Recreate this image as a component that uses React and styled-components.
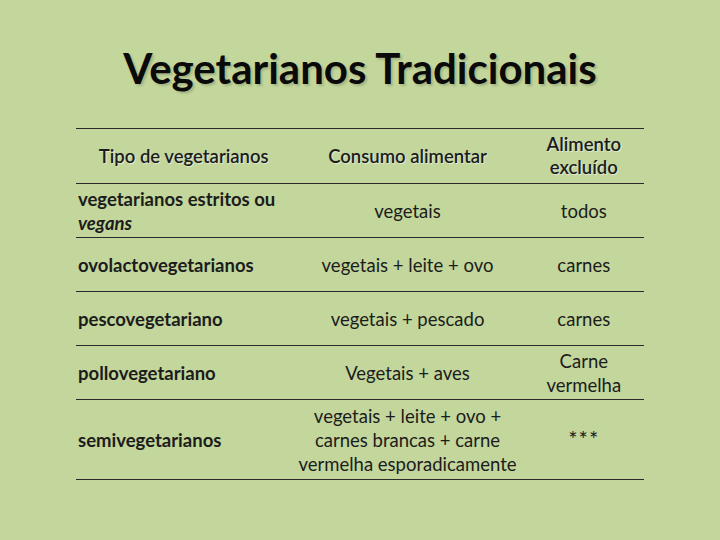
import React from "react";
import styled, { createGlobalStyle } from "styled-components";

const rows = [
  { tipo: "vegetarianos estritos ou", tipoExtra: "vegans", consumo: ["vegetais"], excluido: ["todos"] },
  { tipo: "ovolactovegetarianos", consumo: ["vegetais + leite + ovo"], excluido: ["carnes"] },
  { tipo: "pescovegetariano", consumo: ["vegetais + pescado"], excluido: ["carnes"] },
  { tipo: "pollovegetariano", consumo: ["Vegetais + aves"], excluido: ["Carne", "vermelha"] },
  {
    tipo: "semivegetarianos",
    consumo: ["vegetais + leite + ovo +", "carnes brancas + carne", "vermelha esporadicamente"],
    excluido: ["***"],
    tall: true,
  },
];

const GlobalStyle = createGlobalStyle`
  html, body {
    margin: 0;
    padding: 0;
    background: #c3d69b;
  }
  body {
    font-family: Lato, "Open Sans", sans-serif;
    color: #1c1c1c;
  }
`;

const Slide = styled.div`
  width: 720px;
  height: 540px;
  box-sizing: border-box;
  padding: 38px 76px 0 76px;
  background: #c3d69b;
`;

const Title = styled.h1`
  margin: 0 0 29px 0;
  text-align: center;
  font-size: 42px;
  font-weight: 700;
  color: #0a0a0a;
  height: 61px;
  line-height: 61px;
  text-shadow: 2px 2px 2px rgba(110, 120, 90, 0.35);
`;

const Table = styled.table`
  width: 568px;
  border-collapse: collapse;
  border-top: 1.5px solid #2a2a2a;
`;

const HeadCell = styled.th`
  height: 54px;
  padding: 0 2px;
  font-size: 18.5px;
  font-weight: 600;
  line-height: 23px;
  text-align: center;
  vertical-align: middle;
  width: ${(p) => p.$w}px;
  border-bottom: 1.5px solid #2a2a2a;
  text-shadow: 1px 1px 1px rgba(255, 255, 255, 0.55);
`;

const Cell = styled.td`
  height: ${(p) => (p.$tall ? 79 : 53)}px;
  padding: 0 2px;
  font-size: 18.5px;
  line-height: 24px;
  font-weight: ${(p) => (p.$bold ? 700 : 400)};
  text-align: ${(p) => (p.$left ? "left" : "center")};
  vertical-align: middle;
  border-bottom: 1.5px solid #2a2a2a;
`;

const Line = styled.div`
  white-space: nowrap;
`;

const Stars = styled.span`
  font-size: 22px;
  letter-spacing: 1px;
`;

export default function App() {
  return (
    <Slide>
      <GlobalStyle />
      <Title>Vegetarianos Tradicionais</Title>
      <Table>
        <thead>
          <tr>
            <HeadCell $w={214}>Tipo de vegetarianos</HeadCell>
            <HeadCell $w={230}>Consumo alimentar</HeadCell>
            <HeadCell $w={124}>
              <Line>Alimento</Line>
              <Line>excluído</Line>
            </HeadCell>
          </tr>
        </thead>
        <tbody>
          {rows.map((r) => (
            <tr key={r.tipo}>
              <Cell $bold $left $tall={r.tall}>
                <Line>{r.tipo}</Line>
                {r.tipoExtra && (
                  <Line>
                    <i>{r.tipoExtra}</i>
                  </Line>
                )}
              </Cell>
              <Cell $tall={r.tall}>
                {r.consumo.map((c) => (
                  <Line key={c}>{c}</Line>
                ))}
              </Cell>
              <Cell $tall={r.tall}>
                {r.excluido.map((c) => (
                  <Line key={c}>{c === "***" ? <Stars>{c}</Stars> : c}</Line>
                ))}
              </Cell>
            </tr>
          ))}
        </tbody>
      </Table>
    </Slide>
  );
}
